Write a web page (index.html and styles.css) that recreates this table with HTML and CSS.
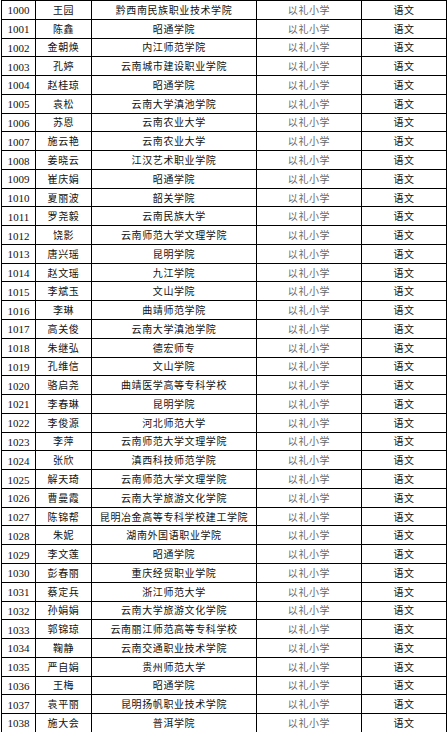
FILE: index.html
```html
<!DOCTYPE html>
<html lang="zh-CN">
<head>
<meta charset="utf-8">
<title>名单</title>
<link rel="stylesheet" href="styles.css">
</head>
<body>
<table class="roster">
<colgroup>
<col class="c-no"><col class="c-name"><col class="c-school"><col class="c-place"><col class="c-subj">
</colgroup>
<tbody>
<tr><td class="no">1000</td><td>王园</td><td>黔西南民族职业技术学院</td><td class="place">以礼小学</td><td>语文</td></tr>
<tr><td class="no">1001</td><td>陈鑫</td><td>昭通学院</td><td class="place">以礼小学</td><td>语文</td></tr>
<tr><td class="no">1002</td><td>金朝焕</td><td>内江师范学院</td><td class="place">以礼小学</td><td>语文</td></tr>
<tr><td class="no">1003</td><td>孔婷</td><td>云南城市建设职业学院</td><td class="place">以礼小学</td><td>语文</td></tr>
<tr><td class="no">1004</td><td>赵桂琼</td><td>昭通学院</td><td class="place">以礼小学</td><td>语文</td></tr>
<tr><td class="no">1005</td><td>袁松</td><td>云南大学滇池学院</td><td class="place">以礼小学</td><td>语文</td></tr>
<tr><td class="no">1006</td><td>苏恩</td><td>云南农业大学</td><td class="place">以礼小学</td><td>语文</td></tr>
<tr><td class="no">1007</td><td>施云艳</td><td>云南农业大学</td><td class="place">以礼小学</td><td>语文</td></tr>
<tr><td class="no">1008</td><td>姜晓云</td><td>江汉艺术职业学院</td><td class="place">以礼小学</td><td>语文</td></tr>
<tr><td class="no">1009</td><td>崔庆娟</td><td>昭通学院</td><td class="place">以礼小学</td><td>语文</td></tr>
<tr><td class="no">1010</td><td>夏丽波</td><td>韶关学院</td><td class="place">以礼小学</td><td>语文</td></tr>
<tr><td class="no">1011</td><td>罗尧毅</td><td>云南民族大学</td><td class="place">以礼小学</td><td>语文</td></tr>
<tr><td class="no">1012</td><td>饶影</td><td>云南师范大学文理学院</td><td class="place">以礼小学</td><td>语文</td></tr>
<tr><td class="no">1013</td><td>唐兴瑶</td><td>昆明学院</td><td class="place">以礼小学</td><td>语文</td></tr>
<tr><td class="no">1014</td><td>赵文瑶</td><td>九江学院</td><td class="place">以礼小学</td><td>语文</td></tr>
<tr><td class="no">1015</td><td>李斌玉</td><td>文山学院</td><td class="place">以礼小学</td><td>语文</td></tr>
<tr><td class="no">1016</td><td>李琳</td><td>曲靖师范学院</td><td class="place">以礼小学</td><td>语文</td></tr>
<tr><td class="no">1017</td><td>高关俊</td><td>云南大学滇池学院</td><td class="place">以礼小学</td><td>语文</td></tr>
<tr><td class="no">1018</td><td>朱继弘</td><td>德宏师专</td><td class="place">以礼小学</td><td>语文</td></tr>
<tr><td class="no">1019</td><td>孔维信</td><td>文山学院</td><td class="place">以礼小学</td><td>语文</td></tr>
<tr><td class="no">1020</td><td>骆启尧</td><td>曲靖医学高等专科学校</td><td class="place">以礼小学</td><td>语文</td></tr>
<tr><td class="no">1021</td><td>李春琳</td><td>昆明学院</td><td class="place">以礼小学</td><td>语文</td></tr>
<tr><td class="no">1022</td><td>李俊源</td><td>河北师范大学</td><td class="place">以礼小学</td><td>语文</td></tr>
<tr><td class="no">1023</td><td>李萍</td><td>云南师范大学文理学院</td><td class="place">以礼小学</td><td>语文</td></tr>
<tr><td class="no">1024</td><td>张欣</td><td>滇西科技师范学院</td><td class="place">以礼小学</td><td>语文</td></tr>
<tr><td class="no">1025</td><td>解天琦</td><td>云南师范大学文理学院</td><td class="place">以礼小学</td><td>语文</td></tr>
<tr><td class="no">1026</td><td>曹曼霞</td><td>云南大学旅游文化学院</td><td class="place">以礼小学</td><td>语文</td></tr>
<tr><td class="no">1027</td><td>陈锦帮</td><td>昆明冶金高等专科学校建工学院</td><td class="place">以礼小学</td><td>语文</td></tr>
<tr><td class="no">1028</td><td>朱妮</td><td>湖南外国语职业学院</td><td class="place">以礼小学</td><td>语文</td></tr>
<tr><td class="no">1029</td><td>李文莲</td><td>昭通学院</td><td class="place">以礼小学</td><td>语文</td></tr>
<tr><td class="no">1030</td><td>彭春丽</td><td>重庆经贸职业学院</td><td class="place">以礼小学</td><td>语文</td></tr>
<tr><td class="no">1031</td><td>蔡定兵</td><td>浙江师范大学</td><td class="place">以礼小学</td><td>语文</td></tr>
<tr><td class="no">1032</td><td>孙娟娟</td><td>云南大学旅游文化学院</td><td class="place">以礼小学</td><td>语文</td></tr>
<tr><td class="no">1033</td><td>郭锦琼</td><td>云南丽江师范高等专科学校</td><td class="place">以礼小学</td><td>语文</td></tr>
<tr><td class="no">1034</td><td>鞠静</td><td>云南交通职业技术学院</td><td class="place">以礼小学</td><td>语文</td></tr>
<tr><td class="no">1035</td><td>严自娟</td><td>贵州师范大学</td><td class="place">以礼小学</td><td>语文</td></tr>
<tr><td class="no">1036</td><td>王梅</td><td>昭通学院</td><td class="place">以礼小学</td><td>语文</td></tr>
<tr><td class="no">1037</td><td>袁平丽</td><td>昆明扬帆职业技术学院</td><td class="place">以礼小学</td><td>语文</td></tr>
<tr><td class="no">1038</td><td>施大会</td><td>普洱学院</td><td class="place">以礼小学</td><td>语文</td></tr>
</tbody>
</table>
</body>
</html>
```

FILE: styles.css
```css
html, body {
  margin: 0;
  padding: 0;
  background: #ffffff;
}

.roster {
  border-collapse: collapse;
  table-layout: fixed;
  width: 445px;
  margin-left: 1px;
  font-family: "Noto Sans CJK SC", "Noto Sans CJK JP", sans-serif;
  font-size: 10px;
  color: #111;
}

.c-no { width: 34px; }
.c-name { width: 56px; }
.c-school { width: 165px; }
.c-place { width: 105px; }
.c-subj { width: 85px; }

.roster tr {
  height: 18.77px;
}

.roster td {
  border: 1px solid #000;
  padding: 0;
  text-align: center;
  vertical-align: middle;
  white-space: nowrap;
  overflow: hidden;
  letter-spacing: 0.6px;
  line-height: 12px;
}

.roster td.no {
  font-family: "Liberation Serif", "Times New Roman", serif;
  font-size: 11px;
  letter-spacing: 0;
  padding-top: 1px;
}

.roster td.place {
  color: #666;
}
```
